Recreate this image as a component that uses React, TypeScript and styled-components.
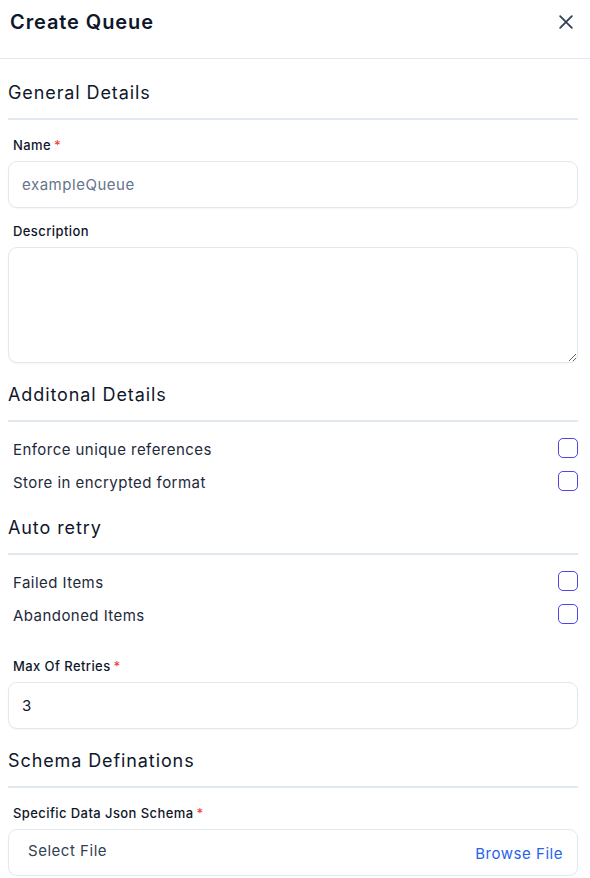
import React from "react";
import styled, { createGlobalStyle } from "styled-components";

const Global = createGlobalStyle`
  * { box-sizing: border-box; }
  html, body { margin: 0; padding: 0; background: #fff; }
  body { font-family: Inter, "Noto Sans", sans-serif; color: #0f172a; }
`;

const Panel = styled.div`
  width: 590px;
  display: flex;
  flex-direction: column;
`;

const Header = styled.header`
  display: flex;
  align-items: center;
  justify-content: space-between;
  height: 59px;
  padding: 10px 12px 24px 10px;
  border-bottom: 1px solid #e2e8f0;
`;

const Title = styled.h1`
  margin: 0;
  font-size: 20px;
  line-height: 24px;
  font-weight: 600;
  letter-spacing: 0.045em;
  color: #0f172a;
`;

const CloseButton = styled.button`
  border: none;
  background: none;
  padding: 0;
  width: 24px;
  height: 24px;
  display: flex;
  align-items: center;
  justify-content: center;
  color: #334155;
  cursor: pointer;
`;

const Body = styled.div`
  padding: 0 12px 0 8px;
  display: flex;
  flex-direction: column;
`;

const SectionTitle = styled.h2<{ $top: number }>`
  margin: ${(p) => p.$top}px 0 0;
  padding-bottom: 13px;
  border-bottom: 2px solid #e2e8f0;
  font-size: 18px;
  line-height: 24px;
  font-weight: 400;
  letter-spacing: 0.05em;
  color: #0f172a;
`;

const Field = styled.div<{ $top: number }>`
  margin-top: ${(p) => p.$top}px;
  display: flex;
  flex-direction: column;
  gap: 8px;
`;

const Label = styled.label`
  padding-left: 5px;
  font-size: 13px;
  line-height: 16px;
  font-weight: 500;
  letter-spacing: 0.032em;
  color: #0f172a;
`;

const Required = styled.span`
  color: #ef4444;
  margin-left: 3px;
`;

const TextInput = styled.input`
  height: 47px;
  width: 100%;
  border: 1px solid #e2e8f0;
  border-radius: 9px;
  padding: 0 12px 0 13px;
  font-family: inherit;
  font-size: 15px;
  letter-spacing: 0.035em;
  color: #0f172a;
  outline: none;
  box-shadow: 0 1px 2px rgba(15, 23, 42, 0.04);
  &::placeholder { color: #64748b; }
`;

const TextArea = styled.textarea`
  height: 116px;
  width: 100%;
  border: 1px solid #e2e8f0;
  border-radius: 9px;
  padding: 10px 12px;
  font-family: inherit;
  font-size: 15px;
  resize: vertical;
  outline: none;
  display: block;
  box-shadow: 0 1px 2px rgba(15, 23, 42, 0.04);
`;

const CheckList = styled.div`
  margin-top: 11px;
  display: flex;
  flex-direction: column;
`;

const CheckRow = styled.label`
  height: 33px;
  display: flex;
  align-items: center;
  justify-content: space-between;
  padding-left: 5px;
  font-size: 15px;
  letter-spacing: 0.03em;
  color: #1e293b;
`;

const Box = styled.span`
  width: 20px;
  height: 20px;
  margin-top: -4px;
  border: 1.5px solid #4f46e5;
  border-radius: 5px;
  background: #fff;
`;

const FileBox = styled.div`
  height: 47px;
  border: 1px solid #e2e8f0;
  border-radius: 9px;
  display: flex;
  align-items: center;
  justify-content: space-between;
  padding: 0 14px 0 19px;
  box-shadow: 0 1px 2px rgba(15, 23, 42, 0.04);
  font-size: 15px;
  letter-spacing: 0.035em;
`;

const FileText = styled.span`
  color: #334155;
  margin-top: -4px;
`;

const BrowseLink = styled.span`
  color: #2563eb;
  margin-top: 1px;
  cursor: pointer;
`;

const Check = ({ label }: { label: string }) => (
  <CheckRow>
    {label}
    <Box />
  </CheckRow>
);

export default function App() {
  return (
    <Panel>
      <Global />
      <Header>
        <Title>Create Queue</Title>
        <CloseButton aria-label="Close">
          <svg width="20" height="20" viewBox="0 0 24 24" fill="none" stroke="currentColor" strokeWidth="2.2" strokeLinecap="round">
            <path d="M5 5l14 14M19 5L5 19" />
          </svg>
        </CloseButton>
      </Header>
      <Body>
        <SectionTitle $top={22}>General Details</SectionTitle>
        <Field $top={17}>
          <Label>
            Name<Required>*</Required>
          </Label>
          <TextInput placeholder="exampleQueue" />
        </Field>
        <Field $top={15}>
          <Label>Description</Label>
          <TextArea />
        </Field>
        <SectionTitle $top={20}>Additonal Details</SectionTitle>
        <CheckList>
          <Check label="Enforce unique references" />
          <Check label="Store in encrypted format" />
        </CheckList>
        <SectionTitle $top={17}>Auto retry</SectionTitle>
        <CheckList>
          <Check label="Failed Items" />
          <Check label="Abandoned Items" />
        </CheckList>
        <Field $top={26}>
          <Label>
            Max Of Retries<Required>*</Required>
          </Label>
          <TextInput defaultValue="3" />
        </Field>
        <SectionTitle $top={20}>Schema Definations</SectionTitle>
        <Field $top={17}>
          <Label>
            Specific Data Json Schema<Required>*</Required>
          </Label>
          <FileBox>
            <FileText>Select File</FileText>
            <BrowseLink>Browse File</BrowseLink>
          </FileBox>
        </Field>
      </Body>
    </Panel>
  );
}
